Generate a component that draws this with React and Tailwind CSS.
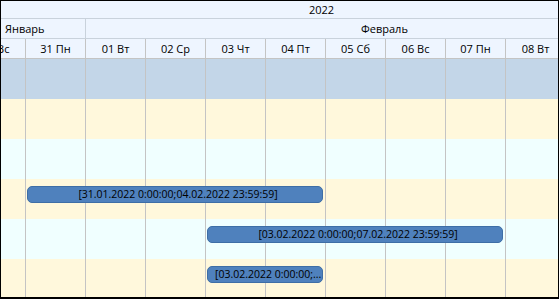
const days = ['30 Вс', '31 Пн', '01 Вт', '02 Ср', '03 Чт', '04 Пт', '05 Сб', '06 Вс', '07 Пн', '08 Вт']

const colStart = [
  'col-start-1', 'col-start-2', 'col-start-3', 'col-start-4', 'col-start-5',
  'col-start-6', 'col-start-7', 'col-start-8', 'col-start-9', 'col-start-10',
]

const rows = [
  { bg: 'bg-[#c3d6e8]' },
  { bg: 'bg-[#fff8dc]' },
  { bg: 'bg-[#f0ffff]' },
  { bg: 'bg-[#fff8dc]', bar: { start: 'col-start-2', span: 'col-span-5', align: 'text-center', text: '[31.01.2022 0:00:00;04.02.2022 23:59:59]' } },
  { bg: 'bg-[#f0ffff]', bar: { start: 'col-start-5', span: 'col-span-5', align: 'text-center', text: '[03.02.2022 0:00:00;07.02.2022 23:59:59]' } },
  // short bar, label is shortened like in the grid control
  { bg: 'bg-[#fff8dc]', bar: { start: 'col-start-5', span: 'col-span-2', align: 'text-left', text: '[03.02.2022 0:00:00;...' } },
]

function BodyRow({ row }) {
  return (
    <div className={`grid grid-cols-[repeat(10,60px)] h-[40px] ${row.bg}`}>
      {days.map((d, i) => (
        <div key={d} className={`row-start-1 ${colStart[i]} border-r border-[#c4c4c4]`} />
      ))}
      {row.bar && (
        <div
          className={`row-start-1 ${row.bar.start} ${row.bar.span} ${row.bar.align} ml-[1px] mr-[3px] mt-[7px] h-[17px] rounded-[5px] bg-[#4f81bd] border border-[#3e6ea6] pl-[7px] pr-[1px] text-[10.5px] leading-[15px] text-black whitespace-nowrap overflow-hidden`}
        >
          {row.bar.text}
        </div>
      )}
    </div>
  )
}

export default function App() {
  return (
    <div
      className="w-[559px] h-[299px] border border-b-2 border-black overflow-hidden bg-white text-black"
      style={{ fontFamily: '"Open Sans", "Noto Sans", sans-serif' }}
    >
      <div className="w-[600px] ml-[-35px]">
        {/* Header */}
        <div className="bg-[#eef5ff] text-[11px]">
          <div className="h-[18px] border-b border-[#c9d2dc] pl-[343px] leading-[17px]">2022</div>
          <div className="flex h-[20px] border-b border-[#c9d2dc] leading-[19px]">
            <div className="w-[120px] border-r border-[#c9d2dc] pl-[39px]">Январь</div>
            <div className="flex-1 pl-[275px]">Февраль</div>
          </div>
          <div className="grid grid-cols-[repeat(10,60px)] h-[20px] border-b border-[#c4c4c4]">
            {days.map((d) => (
              <div key={d} className="border-r border-[#c4c4c4] text-center leading-[19px] whitespace-nowrap">
                {d}
              </div>
            ))}
          </div>
        </div>

        {/* Rows */}
        {rows.map((row, i) => (
          <BodyRow key={i} row={row} />
        ))}
      </div>
    </div>
  )
}
